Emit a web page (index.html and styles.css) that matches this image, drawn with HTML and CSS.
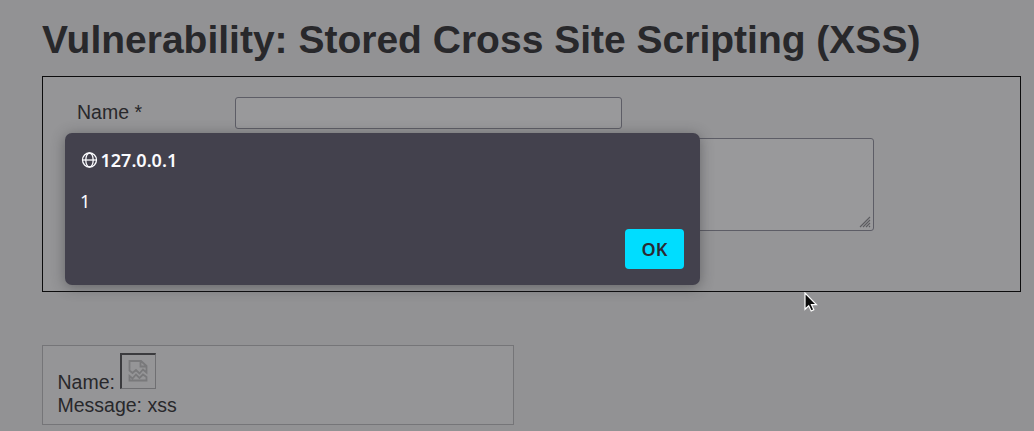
FILE: index.html
```html
<!DOCTYPE html>
<html lang="en">
<head>
<meta charset="utf-8">
<title>Vulnerability: Stored Cross Site Scripting (XSS)</title>
<link rel="stylesheet" href="styles.css">
</head>
<body>
<main class="page">
  <h1 class="title">Vulnerability: Stored Cross Site Scripting (XSS)</h1>
  <section class="form-box">
    <div class="row">
      <span class="label">Name *</span>
      <div class="input"></div>
    </div>
    <div class="row">
      <span class="label"></span>
      <div class="textarea">
        <svg class="grip" width="12" height="12" viewBox="0 0 12 12"><path d="M1 11 11 1M4 11 11 4M7 11 11 7M10 11 11 10"/></svg>
      </div>
    </div>
  </section>
  <section class="comment">
    <div class="comment-name"><span>Name:</span>
      <div class="broken">
        <svg width="20" height="24" viewBox="0 0 20 24"><path d="M1.500 11.500V2H13L18.500 7V13.500L15 10.500 11.500 14.500 8 11 4.500 14ZM12.500 2V7.500H18.500M1.500 21.500V17L4.500 19.500 8 15.500 11.500 19 15 15.500 18.500 18V21.500Z"/></svg>
      </div>
    </div>
    <div class="comment-message">Message: xss</div>
  </section>
</main>
<div class="dialog">
  <div class="host">
    <svg width="17" height="16" viewBox="0 0 17 16"><circle cx="8.500" cy="8" r="7"/><ellipse cx="8.500" cy="8" rx="3.700" ry="7"/><path d="M1.500 8H15.500"/></svg>
    <span>127.0.0.1</span>
  </div>
  <div class="text">1</div>
  <div class="actions"><button class="ok">OK</button></div>
</div>
<svg class="cursor" width="14" height="21" viewBox="0 0 14 21"><path d="M1 1V17.300L4.700 13.800 7.200 19 9.800 17.700 7.400 12.600H12.400Z"/></svg>
</body>
</html>
```
FILE: styles.css
```css
* { box-sizing: border-box; }
body {
  margin: 0;
  width: 1034px;
  height: 431px;
  overflow: hidden;
  background: #929294;
  color: #28282b;
  font-family: "Liberation Sans", Arial, sans-serif;
  font-size: 19.5px;
}
.page { padding: 17px 13px 0 42px; }
.title {
  margin: 0 0 13px;
  font-size: 39px;
  line-height: 46px;
  white-space: nowrap;
}
.form-box {
  display: flex;
  flex-direction: column;
  gap: 9px;
  height: 216px;
  padding: 20px 34px;
  border: 1px solid #0c0c0d;
  background: #959597;
}
.row { display: flex; }
.label { width: 158px; line-height: 31px; }
.input, .textarea {
  border: 1px solid #5d5d66;
  border-radius: 3px;
  background: #99999b;
}
.input { width: 387px; height: 32px; }
.textarea {
  display: flex;
  justify-content: flex-end;
  align-items: flex-end;
  width: 639px;
  height: 93px;
  padding: 2px;
}
.grip { fill: none; stroke: #5c5c60; stroke-width: 1.1; }
.comment {
  width: 472px;
  height: 80px;
  margin-top: 53px;
  padding: 7px 14.5px;
  border: 1px solid #757578;
  background: #959597;
}
.comment-name { display: flex; align-items: flex-end; gap: 5.5px; height: 40px; line-height: 22px; }
.comment-message { line-height: 25px; }
.broken {
  display: flex;
  align-items: center;
  justify-content: center;
  width: 36px;
  height: 36px;
  margin-bottom: 4px;
  padding: 0 2px 2px 0;
  border: 1px solid #6f6f72;
  border-top: 2px solid #3b3b3e;
  border-left: 2px solid #3b3b3e;
}
.broken svg { fill: none; stroke: #79797b; stroke-width: 1.8; }
.dialog {
  position: absolute;
  left: 65px;
  top: 133px;
  width: 635px;
  height: 152px;
  padding: 15px 16px 16px;
  border-radius: 7px;
  background: #43414d;
  box-shadow: 0 2px 14px rgba(40, 40, 45, .45);
  color: #fbfbfe;
  font-family: "Noto Sans", sans-serif;
  font-size: 18px;
}
.host { display: flex; align-items: center; gap: 2.5px; height: 23px; font-weight: 600; }
.host svg { fill: none; stroke: #fbfbfe; stroke-width: 1.3; }
.text { margin: 18px 0 0 -1px; line-height: 25px; }
.actions { display: flex; justify-content: flex-end; margin-top: 15px; }
.ok {
  width: 59px;
  height: 40px;
  padding: 0;
  border: 0;
  border-radius: 4px;
  background: #00ddff;
  color: #2b2a33;
  font: 600 18px "Noto Sans", sans-serif;
}
.cursor { position: absolute; left: 804px; top: 292px; fill: #0b0b0b; stroke: #fff; stroke-width: 1.2; }
```
